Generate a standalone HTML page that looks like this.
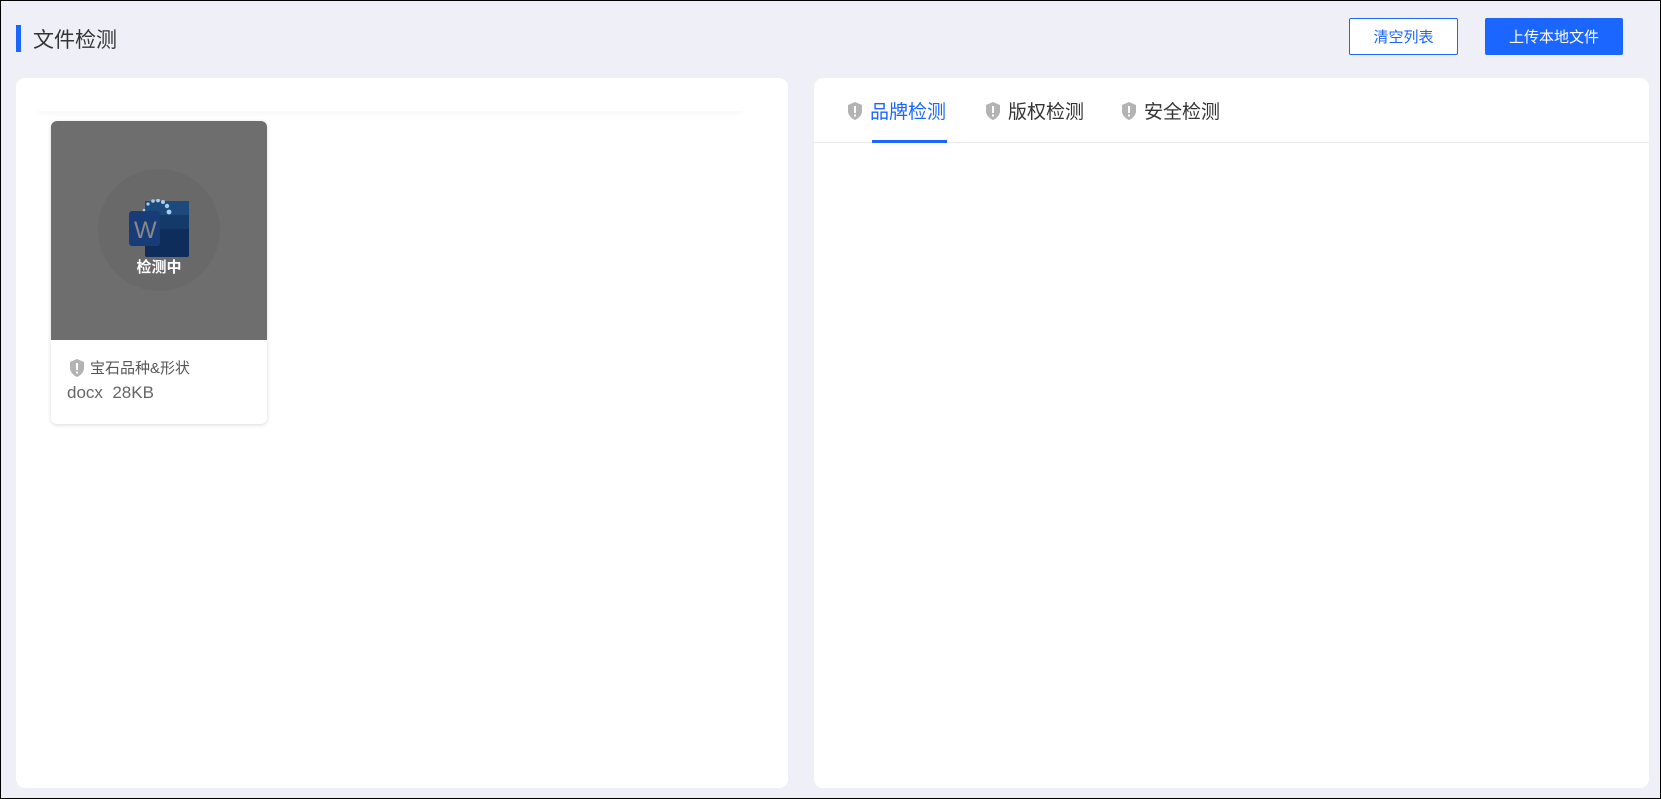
<!DOCTYPE html>
<html><head><meta charset="utf-8"><style>
*{margin:0;padding:0;box-sizing:border-box}
body{width:1661px;height:799px;background:#eff0f7;font-family:"Liberation Sans","Noto Sans CJK SC",sans-serif;position:relative;overflow:hidden;border:1px solid #000}
.a{position:absolute}
.btn{position:absolute;top:17px;height:37px;border-radius:2px;font-size:15px;display:flex;align-items:center;justify-content:center}
.panel{position:absolute;top:77px;height:710px;background:#fff;border-radius:9px}
.tab{position:absolute;top:96px;font-size:19px;color:#333;display:flex;align-items:center;gap:6px}
</style></head><body>
<div class="a" style="left:15px;top:24px;width:5px;height:27px;background:#1a66ff"></div>
<div class="a" style="left:32px;top:23px;font-size:21px;color:#333">文件检测</div>
<div class="btn" style="left:1348px;width:109px;border:1px solid #1a66ff;background:#fff;color:#1a66ff">清空列表</div>
<div class="btn" style="left:1484px;width:138px;background:#1a66ff;color:#fff">上传本地文件</div>

<div class="panel" style="left:15px;width:772px">
  <div class="a" style="left:22px;top:27px;width:704px;height:6px;box-shadow:0 3px 6px rgba(0,0,0,0.04)"></div>
  <div class="a" style="left:35px;top:43px;width:216px;height:303px;border-radius:6px;box-shadow:0 1px 4px rgba(0,0,0,0.15);overflow:hidden;background:#fff">
    <div class="a" style="left:0;top:0;width:216px;height:219px;background:#6e6e6e"></div>
    <div class="a" style="left:47px;top:48px;width:122px;height:122px;border-radius:50%;background:#696969"></div>
    <svg class="a" style="left:78px;top:78px" width="60" height="58" viewBox="0 0 60 58">
      <rect x="16" y="2" width="44" height="56" rx="2" fill="#0f2d5a"/>
      <rect x="16" y="2" width="44" height="14" fill="#1c4a7c"/>
      <rect x="16" y="16" width="44" height="14" fill="#143a6a"/>
      <rect x="0" y="12" width="31" height="35" rx="3" fill="#173c78"/>
      <text x="5" y="39" font-size="24" fill="#888" font-family="Liberation Sans">W</text>
      <g fill="#a7cdf0"><circle cx="15" cy="11" r="1.3"/><circle cx="19" cy="5" r="1.6"/><circle cx="24" cy="2" r="1.8"/><circle cx="29" cy="1.5" r="1.9"/><circle cx="34" cy="3" r="2"/><circle cx="38" cy="7" r="2.2"/><circle cx="40" cy="13" r="2.4"/></g>
    </svg>
    <div class="a" style="left:0;width:216px;top:135px;text-align:center;color:#fff;font-size:15px;font-weight:bold">检测中</div>
    <div class="a" style="left:17px;top:236px;font-size:15px;color:#555;display:flex;align-items:center;gap:4px">
      <svg width="18" height="20" viewBox="0 0 18 20"><path d="M9 1L16 4V10C16 14 13 17 9 19C5 17 2 14 2 10V4Z" fill="#b3b3b3"/><rect x="8" y="5" width="2" height="7" fill="#fff"/><rect x="8" y="13.5" width="2" height="2" fill="#fff"/></svg>宝石品种&amp;形状</div>
    <div class="a" style="left:16px;top:262px;font-size:17px;color:#666">docx&nbsp;&nbsp;28KB</div>
  </div>
</div>

<div class="panel" style="left:813px;width:835px">
  <div class="a" style="left:0;top:64px;width:835px;height:1px;background:#ececf0"></div>
  <div class="a" style="left:58px;top:62px;width:75px;height:3px;background:#1a66ff"></div>
</div>
<div class="tab" style="left:845px;color:#1a66ff"><svg width="18" height="20" viewBox="0 0 18 20"><path d="M9 1L16 4V10C16 14 13 17 9 19C5 17 2 14 2 10V4Z" fill="#b3b3b3"/><rect x="8" y="5" width="2" height="7" fill="#fff"/><rect x="8" y="13.5" width="2" height="2" fill="#fff"/></svg>品牌检测</div>
<div class="tab" style="left:983px"><svg width="18" height="20" viewBox="0 0 18 20"><path d="M9 1L16 4V10C16 14 13 17 9 19C5 17 2 14 2 10V4Z" fill="#b3b3b3"/><rect x="8" y="5" width="2" height="7" fill="#fff"/><rect x="8" y="13.5" width="2" height="2" fill="#fff"/></svg>版权检测</div>
<div class="tab" style="left:1119px"><svg width="18" height="20" viewBox="0 0 18 20"><path d="M9 1L16 4V10C16 14 13 17 9 19C5 17 2 14 2 10V4Z" fill="#b3b3b3"/><rect x="8" y="5" width="2" height="7" fill="#fff"/><rect x="8" y="13.5" width="2" height="2" fill="#fff"/></svg>安全检测</div>
</body></html>
